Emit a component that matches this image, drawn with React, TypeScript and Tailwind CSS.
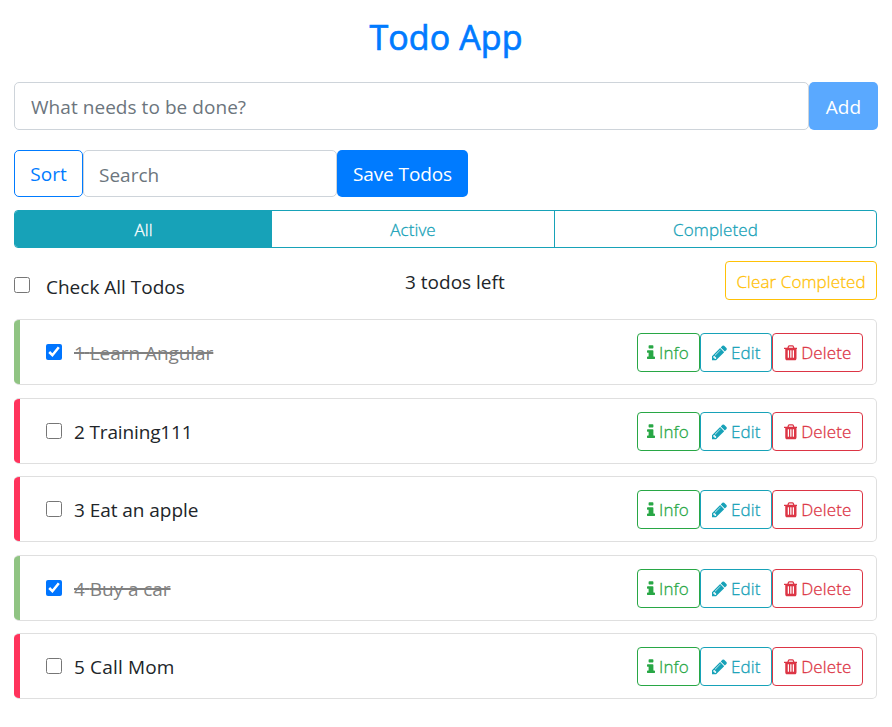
import { useState } from 'react';

const todos = [
  { id: 1, title: 'Learn Angular', done: true, tracking: 'tracking-[-0.05px]', gap: 'mb-[13px]' },
  { id: 2, title: 'Training111', done: false, tracking: 'tracking-[-0.15px]', gap: 'mb-[12px]' },
  { id: 3, title: 'Eat an apple', done: false, tracking: 'tracking-[-0.05px]', gap: 'mb-[13px]' },
  { id: 4, title: 'Buy a car', done: true, tracking: 'tracking-[-0.05px]', gap: 'mb-[12px]' },
  { id: 5, title: 'Call Mom', done: false, tracking: 'tracking-[0.15px]', gap: '' },
];

function InfoIcon() {
  return (
    <svg className="h-[17.5px] w-[8px] shrink-0" viewBox="576 0 640 1792" preserveAspectRatio="none" fill="currentColor">
      <path d="M1216 1344v128q0 26-19 45t-45 19h-512q-26 0-45-19t-19-45v-128q0-26 19-45t45-19h64v-384h-64q-26 0-45-19t-19-45v-128q0-26 19-45t45-19h384q26 0 45 19t19 45v576h64q26 0 45 19t19 45zm-128-1152v192q0 26-19 45t-45 19h-256q-26 0-45-19t-19-45v-192q0-26 19-45t45-19h256q26 0 45 19t19 45z" />
    </svg>
  );
}

function PencilIcon() {
  return (
    <svg className="h-[17.5px] w-[15px] shrink-0" viewBox="128 0 1536 1792" fill="currentColor">
      <path d="M491 1536l91-91-235-235-91 91v107h128v128h107zm523-928q0-22-22-22-10 0-17 7l-542 542q-7 7-7 17 0 22 22 22 10 0 17-7l542-542q7-7 7-17zm-54-192l416 416-832 832h-416v-416zm683 96q0 53-37 90l-166 166-416-416 166-165q36-38 90-38 53 0 91 38l235 234q37 39 37 91z" />
    </svg>
  );
}

function TrashIcon() {
  return (
    <svg className="h-[17.5px] w-[13.75px] shrink-0" viewBox="192 0 1408 1792" fill="currentColor">
      <path d="M704 1376v-704q0-14-9-23t-23-9h-64q-14 0-23 9t-9 23v704q0 14 9 23t23 9h64q14 0 23-9t9-23zm256 0v-704q0-14-9-23t-23-9h-64q-14 0-23 9t-9 23v704q0 14 9 23t23 9h64q14 0 23-9t9-23zm256 0v-704q0-14-9-23t-23-9h-64q-14 0-23 9t-9 23v704q0 14 9 23t23 9h64q14 0 23-9t9-23zm-544-992h448l-48-117q-7-9-17-11h-317q-10 2-17 11zm928 32v64q0 14-9 23t-23 9h-96v948q0 83-47 143.5t-113 60.5h-832q-66 0-113-58.5t-47-141.5v-952h-96q-14 0-23-9t-9-23v-64q0-14 9-23t23-9h309l70-167q15-37 54-63t79-26h320q40 0 79 26t54 63l70 167h309q14 0 23 9t9 23z" />
    </svg>
  );
}

function Checkbox({ checked, onChange }: { checked: boolean; onChange: () => void }) {
  return (
    <input type="checkbox" checked={checked} onChange={onChange} className="size-4 shrink-0 accent-[#0075ff]" />
  );
}

export default function App() {
  const [items, setItems] = useState(todos);
  const toggle = (id: number) => setItems(items.map((t) => (t.id === id ? { ...t, done: !t.done } : t)));
  const allDone = items.every((t) => t.done);

  return (
    <main className="h-[727px] bg-white pl-[14px] pt-[11px] font-['Open_Sans','Noto_Sans',sans-serif] text-[19px] text-[#212529]">
      <h1 className="mb-[19px] h-[52px] w-[864px] text-center text-[34px] font-normal leading-[52px] tracking-[0.1px] text-[#007bff] [-webkit-text-stroke:0.7px]">
        Todo App
      </h1>

      <div className="mb-5 flex h-[48px] w-[864px]">
        <input
          placeholder="What needs to be done?"
          className="w-[795px] rounded-[5px] border border-[#ced4da] bg-white px-4 pt-[2px] tracking-[0.05px] placeholder:text-[#6c757d]"
        />
        <button className="w-[69px] rounded-[5px] bg-[#5aa9ff] pt-[2px] text-white">Add</button>
      </div>

      <div className="mb-[13px] flex h-[47px]">
        <button className="w-[69px] rounded-[5px] border border-[#007bff] pt-px text-[#007bff]">Sort</button>
        <input
          placeholder="Search"
          className="w-[254px] rounded-[5px] border border-[#ced4da] bg-white px-[15px] pt-[3px] placeholder:text-[#6c757d]"
        />
        <button className="w-[131px] rounded-[5px] bg-[#007bff] pt-px tracking-[-0.1px] text-white">Save Todos</button>
      </div>

      <div className="mb-[13px] flex h-[38px] w-[863px] overflow-hidden rounded-[4px] border border-[#17a2b8] text-[17px] font-light tracking-[0.1px] text-[#17a2b8] [-webkit-text-stroke:0.3px]">
        <button className="w-[257px] bg-[#17a2b8] pt-px text-white">All</button>
        <button className="w-[283px] border-r border-[#17a2b8] pt-px">Active</button>
        <button className="flex-1 pt-px">Completed</button>
      </div>

      <div className="mb-[19px] flex h-[39px] w-[863px] items-start">
        <label className="flex w-[391px] items-center pt-[12px] leading-[28px]">
          <span className="-mt-[5px] mr-[16px] flex">
            <Checkbox checked={allDone} onChange={() => setItems(items.map((t) => ({ ...t, done: !allDone })))} />
          </span>
          Check All Todos
        </label>
        <span className="flex-1 pt-[7px] leading-[28px]">3 todos left</span>
        <button className="h-[39px] w-[152px] whitespace-nowrap rounded-[4px] border border-[#ffc107] pt-[2px] text-[17px] font-light tracking-[0.1px] text-[#ffc107] [-webkit-text-stroke:0.3px]">
          Clear Completed
        </button>
      </div>

      <ul>
        {items.map((t) => (
          <li
            key={t.id}
            className={`flex h-[66px] w-[863px] overflow-hidden rounded-[5px] border border-l-0 border-[#dfdfdf] ${t.gap}`}
          >
            <span className={`-my-px w-[6px] ${t.done ? 'bg-[#90c483]' : 'bg-[#ff335c]'}`} />
            <label className="ml-[26px] flex flex-1 items-center">
              <Checkbox checked={t.done} onChange={() => toggle(t.id)} />
              <span
                className={`ml-3 pt-[3px] ${t.tracking} ${t.done ? 'text-[#808080] line-through decoration-2' : ''}`}
              >
                {t.id} {t.title}
              </span>
            </label>
            <div className="mr-[13px] mt-[13px] flex h-[39px] text-[17px] font-light tracking-[0.1px] [-webkit-text-stroke:0.3px]">
              <button className="flex w-[63px] items-center gap-1 rounded-[4px] border border-[#28a745] pl-[9px] pt-px text-[#28a745]">
                <InfoIcon />
                Info
              </button>
              <button className="flex w-[72px] items-center gap-1 rounded-[4px] border border-[#17a2b8] pl-[11px] pt-px text-[#17a2b8]">
                <PencilIcon />
                Edit
              </button>
              <button className="flex w-[91px] items-center gap-1 rounded-[4px] border border-[#dc3545] pl-[10.5px] pt-px text-[#dc3545]">
                <TrashIcon />
                Delete
              </button>
            </div>
          </li>
        ))}
      </ul>
    </main>
  );
}
